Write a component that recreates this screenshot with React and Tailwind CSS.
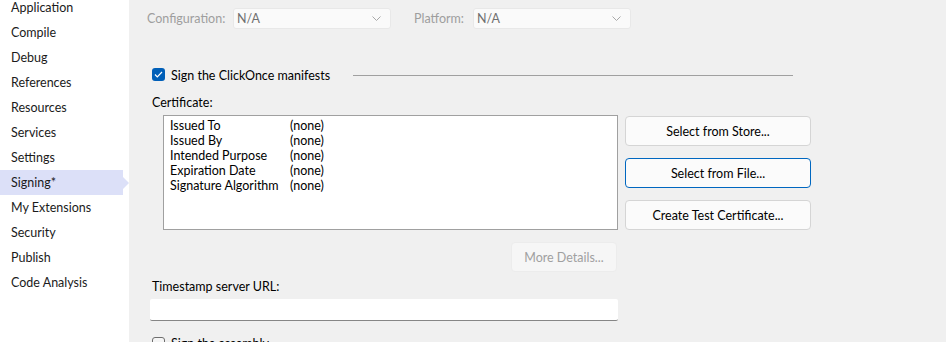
import React from "react";

const navItems = [
  "Application",
  "Compile",
  "Debug",
  "References",
  "Resources",
  "Services",
  "Settings",
  "Signing*",
  "My Extensions",
  "Security",
  "Publish",
  "Code Analysis",
];

const certRows = [
  ["Issued To", "(none)"],
  ["Issued By", "(none)"],
  ["Intended Purpose", "(none)"],
  ["Expiration Date", "(none)"],
  ["Signature Algorithm", "(none)"],
];

const Chevron = () => (
  <svg width="9" height="5" viewBox="0 0 9 5" className="shrink-0">
    <path d="M0.5 0.5 L4.5 4.5 L8.5 0.5" fill="none" stroke="#a8a8a8" strokeWidth="1" />
  </svg>
);

const Dropdown = ({ value }) => (
  <div className="flex items-center justify-between w-[158px] h-[21px] pl-[3px] pr-[9px] bg-[#fafafa] border border-[#e8e8e8] rounded-[3px] text-[#707070]">
    <span className="pt-px">{value}</span>
    <Chevron />
  </div>
);

const Checkbox = ({ checked }) =>
  checked ? (
    <div className="w-[13px] h-[13px] rounded-[3px] bg-[#005fb8] flex items-center justify-center shrink-0">
      <svg width="9" height="7" viewBox="0 0 9 7">
        <path d="M1 3.5 L3.3 5.8 L8 1" fill="none" stroke="#fff" strokeWidth="1.2" />
      </svg>
    </div>
  ) : (
    <div className="w-[13px] h-[13px] rounded-[3px] border border-[#6e6e6e] bg-[#f5f5f5] shrink-0" />
  );

const Button = ({ children, focused, disabled, className = "" }) => (
  <div
    className={
      "flex items-center justify-center h-[30px] pt-px rounded-[4px] border " +
      (focused
        ? "border-[#0067c0] bg-[#fbfbfb] text-black "
        : disabled
        ? "border-[#ececec] bg-[#f6f6f6] text-[#a0a0a0] "
        : "border-[#d5d5d5] bg-[#fbfbfb] text-black ") +
      className
    }
  >
    {children}
  </div>
);

export default function App() {
  return (
    <div
      className="flex w-[946px] h-[342px] overflow-hidden text-[12.5px] leading-[16px] bg-[#f0f0f0]"
      style={{ fontFamily: 'Lato, "Noto Sans", sans-serif' }}
    >
      {/* left nav */}
      <div className="w-[129px] h-full bg-white shrink-0">
        <div className="-mt-[5px]">
          {navItems.map((item) =>
            item === "Signing*" ? (
              <div key={item} className="flex items-center h-[25px]">
                <div className="w-[123px] h-full bg-[#dce0f8] pl-[11px] pt-px flex items-center text-[#1b1b1b]">
                  {item}
                </div>
                <div className="w-0 h-0 border-y-[6px] border-y-transparent border-l-[6px] border-l-[#dce0f8]" />
              </div>
            ) : (
              <div key={item} className="flex items-center h-[25px] pl-[11px] pt-px text-[#1b1b1b]">
                {item}
              </div>
            )
          )}
        </div>
      </div>

      {/* page */}
      <div className="flex-1 flex flex-col">
        <div className="flex items-center pt-[8px] pl-[18px]">
          <span className="w-[86px] pt-px text-[#9e9e9e]">Configuration:</span>
          <Dropdown value="N/A" />
          <span className="ml-[23px] w-[59px] pt-px text-[#9e9e9e]">Platform:</span>
          <Dropdown value="N/A" />
        </div>
        <div className="mt-[16px] ml-[15px] h-px bg-[#a0a0a0]" />

        <div className="flex flex-col pl-[23px]">
          <div className="flex items-center h-[13px] mt-[23px]">
            <Checkbox checked />
            <span className="ml-[6px] w-[182px] pt-[2px] text-black">Sign the ClickOnce manifests</span>
            <div className="w-[440px] h-px bg-[#a0a0a0] mt-[2px]" />
          </div>

          <div className="mt-[14px] text-black">Certificate:</div>

          <div className="flex mt-[4px]">
            <div className="ml-[11px] w-[455px] h-[115px] bg-white border border-[#a0a0a0] pl-[6px] pt-[2px]">
              {certRows.map(([k, v]) => (
                <div key={k} className="flex h-[15px] leading-[15px] text-black whitespace-nowrap">
                  <span className="w-[120px] shrink-0">{k}</span>
                  <span>{v}</span>
                </div>
              ))}
            </div>
            <div className="ml-[7px] mt-px flex flex-col gap-[12px] w-[186px]">
              <Button>Select from Store...</Button>
              <Button focused>Select from File...</Button>
              <Button>Create Test Certificate...</Button>
            </div>
          </div>

          <Button disabled className="mt-[12px] ml-[359px] w-[106px]">
            More Details...
          </Button>

          <div className="mt-[7px] text-black">Timestamp server URL:</div>
          <div className="mt-[4px] -ml-[2px] w-[468px] h-[22px] bg-white border-b border-[#868686] rounded-[2px]" />

          <div className="flex items-start mt-[16px]">
            <Checkbox />
            <span className="ml-[6px] -mt-px text-black">Sign the assembly</span>
          </div>
        </div>
      </div>
    </div>
  );
}
